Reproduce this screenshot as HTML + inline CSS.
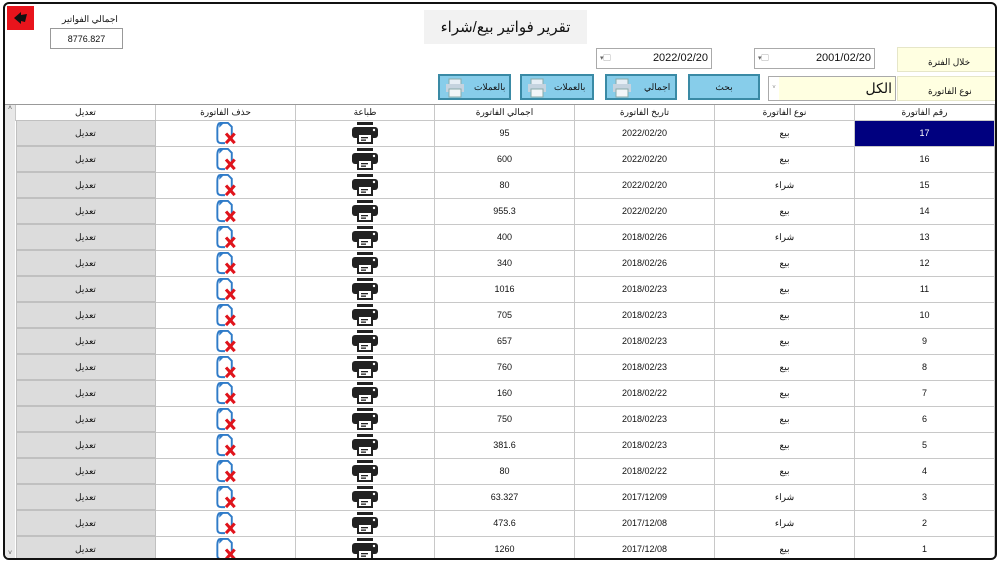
<!DOCTYPE html>
<html><head><meta charset="utf-8"><style>
*{box-sizing:border-box;margin:0;padding:0}
body{width:1000px;height:562px;background:#fff;font-family:"Liberation Sans","Noto Sans CJK SC",sans-serif;position:relative;overflow:hidden;font-size:9px;color:#111}
.win{position:absolute;left:3px;top:2px;width:994px;height:558px;border:2px solid #111;border-radius:6px;background:#fff;overflow:hidden}
.a{position:absolute}
.c{display:flex;align-items:center;justify-content:center}
.yl{background:#ffffe1;border:1px solid #e6e6c8}
.btn{background:#87cdea;border:2px solid #3a8aa5}
.dp{border:1px solid #aaa;background:#fff;font-size:11px}
table{position:absolute;left:10px;top:101px;border-collapse:collapse;table-layout:fixed;direction:ltr}
td{border:1px solid #c8c8c8;height:25px;text-align:center;font-size:9px;padding:0;overflow:hidden}
tr.h td{height:15px;border-top:none}
td.e{background:#dcdcdc;border:1px solid #fff;outline:1px solid #c0c0c0;outline-offset:-1px}
td.sel{background:#00007f;color:#fff}
td svg{display:block;margin:0 auto}
</style></head><body>
<div class="win">
<svg width="0" height="0" style="position:absolute"><defs>
<symbol id="doc" viewBox="0 0 26 26"><path d="M6 2 H15 L19 6 V20 M12 23 H8 Q4 23 4 19 V8 Q4 4 6 2" fill="none" stroke="#2f7bc8" stroke-width="2"/><path d="M6 2 L11 2 L6 7 Z" fill="#2f7bc8"/><path d="M13 13 L22 23 M22 13 L13 23" stroke="#e0141c" stroke-width="3.2"/></symbol>
<symbol id="prn" viewBox="0 0 28 24"><rect x="6" y="1" width="16" height="3" fill="#222"/><rect x="1" y="6" width="26" height="11" rx="3" fill="#222"/><rect x="6" y="12" width="16" height="11" fill="#222"/><rect x="8" y="14" width="12" height="7" fill="#fff"/><rect x="10" y="16" width="7" height="1.3" fill="#222"/><rect x="10" y="18.5" width="5" height="1.3" fill="#222"/><circle cx="23" cy="9" r="1.2" fill="#fff"/></symbol>
<symbol id="sp" viewBox="0 0 20 20"><rect x="4" y="1" width="12" height="6" fill="#e6eef5" stroke="#8aa" stroke-width="1"/><rect x="1" y="6" width="18" height="8" fill="#c5d3df"/><rect x="4" y="11" width="12" height="8" fill="#f2f5f8" stroke="#8aa" stroke-width="1"/></symbol>
</defs></svg>
<div class="a c" style="left:2px;top:2px;width:27px;height:24px;background:#e8141c"><svg width="16" height="16" viewBox="0 0 16 16"><path d="M1 8 L8 2 L8 5 L14 4 L12 12 L8 11 L8 14 Z" fill="#111"/></svg></div>
<div class="a" style="left:50px;top:10px;width:70px;text-align:center;font-size:9px">اجمالي الفواتير</div>
<div class="a c" style="left:45px;top:24px;width:73px;height:21px;border:1px solid #999;font-size:9px">8776.827</div>
<div class="a c" style="left:419px;top:6px;width:163px;height:34px;background:#f2f2f2;font-size:15px">تقرير فواتير بيع/شراء</div>
<div class="a dp" style="left:591px;top:44px;width:116px;height:21px"><span class="a" style="left:3px;top:4px;font-size:7px;color:#666">▾▢</span><span class="a" style="right:3px;top:3px">2022/02/20</span></div>
<div class="a dp" style="left:749px;top:44px;width:121px;height:21px"><span class="a" style="left:3px;top:4px;font-size:7px;color:#666">▾▢</span><span class="a" style="right:3px;top:3px">2001/02/20</span></div>
<div class="a yl" style="left:892px;top:43px;width:100px;height:25px;font-size:9px;padding:9px 0 0 30px">خلال الفترة</div>
<div class="a yl" style="left:892px;top:72px;width:100px;height:25px;font-size:9px;padding:9px 0 0 30px">نوع الفاتورة</div>
<div class="a" style="left:763px;top:72px;width:128px;height:25px;border:1px solid #aaa;background:#ffffe1"><div style="position:absolute;left:0;top:0;width:10px;height:23px;background:#fff;font-size:6px;color:#888;padding-top:8px;text-align:center">˅</div><span class="a" style="right:3px;top:3px;font-size:14px">الكل</span></div>
<div class="a btn c" style="left:683px;top:70px;width:72px;height:26px;font-size:9px">بحث</div>
<div class="a btn" style="left:600px;top:70px;width:72px;height:26px"><svg class="a" style="left:5px;top:2px" width="20" height="20"><use href="#sp"/></svg><span class="a" style="left:37px;top:6px">اجمالي</span></div>
<div class="a btn" style="left:515px;top:70px;width:74px;height:26px"><svg class="a" style="left:5px;top:2px" width="20" height="20"><use href="#sp"/></svg><span class="a" style="left:32px;top:6px">بالعملات</span></div>
<div class="a btn" style="left:433px;top:70px;width:73px;height:26px"><svg class="a" style="left:5px;top:2px" width="20" height="20"><use href="#sp"/></svg><span class="a" style="left:34px;top:6px">بالعملات</span></div>
<div class="a" style="left:0;top:100px;width:994px;height:1px;background:#999"></div>
<div class="a" style="left:0;top:101px;width:10px;height:456px;background:#e8e8e8;font-size:7px;color:#555;text-align:center">˄<div style="position:absolute;bottom:4px;width:10px">˅</div></div>
<table>
<colgroup><col style="width:140px"><col style="width:140px"><col style="width:139px"><col style="width:140px"><col style="width:140px"><col style="width:140px"><col style="width:140px"></colgroup>
<tr class="h"><td>تعديل</td><td>حذف الفاتورة</td><td>طباعة</td><td>اجمالي الفاتورة</td><td>تاريخ الفاتورة</td><td>نوع الفاتورة</td><td>رقم الفاتورة</td></tr>
<tr><td class="e">تعديل</td><td><svg width="26" height="25"><use href="#doc"/></svg></td><td><svg width="28" height="24"><use href="#prn"/></svg></td><td>95</td><td>2022/02/20</td><td>بيع</td><td class="sel">17</td></tr>
<tr><td class="e">تعديل</td><td><svg width="26" height="25"><use href="#doc"/></svg></td><td><svg width="28" height="24"><use href="#prn"/></svg></td><td>600</td><td>2022/02/20</td><td>بيع</td><td>16</td></tr>
<tr><td class="e">تعديل</td><td><svg width="26" height="25"><use href="#doc"/></svg></td><td><svg width="28" height="24"><use href="#prn"/></svg></td><td>80</td><td>2022/02/20</td><td>شراء</td><td>15</td></tr>
<tr><td class="e">تعديل</td><td><svg width="26" height="25"><use href="#doc"/></svg></td><td><svg width="28" height="24"><use href="#prn"/></svg></td><td>955.3</td><td>2022/02/20</td><td>بيع</td><td>14</td></tr>
<tr><td class="e">تعديل</td><td><svg width="26" height="25"><use href="#doc"/></svg></td><td><svg width="28" height="24"><use href="#prn"/></svg></td><td>400</td><td>2018/02/26</td><td>شراء</td><td>13</td></tr>
<tr><td class="e">تعديل</td><td><svg width="26" height="25"><use href="#doc"/></svg></td><td><svg width="28" height="24"><use href="#prn"/></svg></td><td>340</td><td>2018/02/26</td><td>بيع</td><td>12</td></tr>
<tr><td class="e">تعديل</td><td><svg width="26" height="25"><use href="#doc"/></svg></td><td><svg width="28" height="24"><use href="#prn"/></svg></td><td>1016</td><td>2018/02/23</td><td>بيع</td><td>11</td></tr>
<tr><td class="e">تعديل</td><td><svg width="26" height="25"><use href="#doc"/></svg></td><td><svg width="28" height="24"><use href="#prn"/></svg></td><td>705</td><td>2018/02/23</td><td>بيع</td><td>10</td></tr>
<tr><td class="e">تعديل</td><td><svg width="26" height="25"><use href="#doc"/></svg></td><td><svg width="28" height="24"><use href="#prn"/></svg></td><td>657</td><td>2018/02/23</td><td>بيع</td><td>9</td></tr>
<tr><td class="e">تعديل</td><td><svg width="26" height="25"><use href="#doc"/></svg></td><td><svg width="28" height="24"><use href="#prn"/></svg></td><td>760</td><td>2018/02/23</td><td>بيع</td><td>8</td></tr>
<tr><td class="e">تعديل</td><td><svg width="26" height="25"><use href="#doc"/></svg></td><td><svg width="28" height="24"><use href="#prn"/></svg></td><td>160</td><td>2018/02/22</td><td>بيع</td><td>7</td></tr>
<tr><td class="e">تعديل</td><td><svg width="26" height="25"><use href="#doc"/></svg></td><td><svg width="28" height="24"><use href="#prn"/></svg></td><td>750</td><td>2018/02/23</td><td>بيع</td><td>6</td></tr>
<tr><td class="e">تعديل</td><td><svg width="26" height="25"><use href="#doc"/></svg></td><td><svg width="28" height="24"><use href="#prn"/></svg></td><td>381.6</td><td>2018/02/23</td><td>بيع</td><td>5</td></tr>
<tr><td class="e">تعديل</td><td><svg width="26" height="25"><use href="#doc"/></svg></td><td><svg width="28" height="24"><use href="#prn"/></svg></td><td>80</td><td>2018/02/22</td><td>بيع</td><td>4</td></tr>
<tr><td class="e">تعديل</td><td><svg width="26" height="25"><use href="#doc"/></svg></td><td><svg width="28" height="24"><use href="#prn"/></svg></td><td>63.327</td><td>2017/12/09</td><td>شراء</td><td>3</td></tr>
<tr><td class="e">تعديل</td><td><svg width="26" height="25"><use href="#doc"/></svg></td><td><svg width="28" height="24"><use href="#prn"/></svg></td><td>473.6</td><td>2017/12/08</td><td>شراء</td><td>2</td></tr>
<tr><td class="e">تعديل</td><td><svg width="26" height="25"><use href="#doc"/></svg></td><td><svg width="28" height="24"><use href="#prn"/></svg></td><td>1260</td><td>2017/12/08</td><td>بيع</td><td>1</td></tr>
</table>
</div>
</body></html>
